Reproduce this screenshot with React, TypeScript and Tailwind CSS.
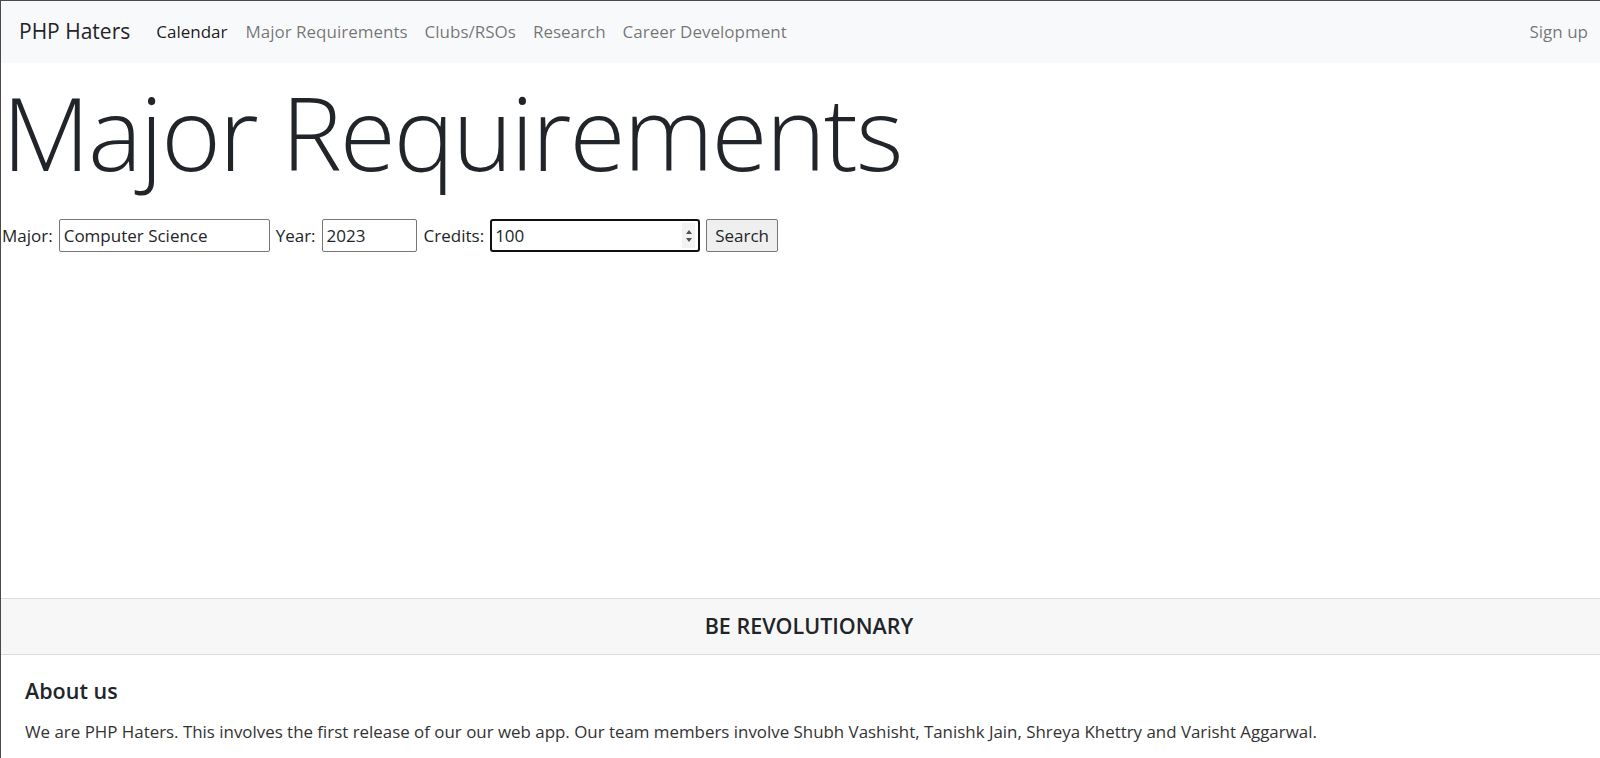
import { useState } from 'react';

const navLinks = ['Major Requirements', 'Clubs/RSOs', 'Research', 'Career Development'];

export default function App() {
  const [major, setMajor] = useState('Computer Science');
  const [year, setYear] = useState('2023');
  const [credits, setCredits] = useState('100');

  return (
    <div
      className="min-h-[758px] bg-white text-[#212529] border-l border-t border-[#4a4a4a] overflow-hidden"
      style={{ fontFamily: '"Open Sans", "Noto Sans", sans-serif' }}
    >
      <nav className="h-[62px] bg-[#f8f9fa] flex items-center pl-[18px] pr-[12px]">
        <span className="text-[21px] mr-[26px]">PHP Haters</span>
        <a className="text-[17px] text-[rgba(0,0,0,0.9)] mr-[18px]">Calendar</a>
        {navLinks.map((l) => (
          <a key={l} className="text-[17px] text-[rgba(0,0,0,0.55)] mr-[17px]">
            {l}
          </a>
        ))}
        <a className="ml-auto text-[17px] text-[rgba(0,0,0,0.55)]">Sign up</a>
      </nav>

      <main className="h-[535px]">
        <h1 className="text-[102px] font-light leading-[1.2] pl-[1px] pt-[8px] tracking-[-2px]">
          Major Requirements
        </h1>
        <form
          className="flex items-center gap-[6px] text-[17px] mt-[26px]"
          onSubmit={(e) => e.preventDefault()}
        >
          <label htmlFor="major" className="pl-[1px]">Major:</label>
          <input
            id="major"
            value={major}
            onChange={(e) => setMajor(e.target.value)}
            className="w-[211px] h-[33px] border border-[#767676] rounded-[2px] px-[4px] outline-none"
          />
          <label htmlFor="year">Year:</label>
          <input
            id="year"
            value={year}
            onChange={(e) => setYear(e.target.value)}
            className="w-[95px] h-[33px] border border-[#767676] rounded-[2px] px-[4px] outline-none"
          />
          <label htmlFor="credits" className="ml-[1px]">Credits:</label>
          <div className="relative">
            <input
              id="credits"
              value={credits}
              onChange={(e) => setCredits(e.target.value)}
              className="w-[210px] h-[33px] border-2 border-[#101010] rounded-[3px] px-[3px] outline-none"
            />
            <div className="absolute right-[5px] top-[4px] bottom-[4px] w-[13px] bg-[#f3f3f3] flex flex-col items-center justify-center gap-[4px]">
              <span className="block w-0 h-0 border-l-[3px] border-r-[3px] border-b-[4px] border-l-transparent border-r-transparent border-b-[#505050]" />
              <span className="block w-0 h-0 border-l-[3px] border-r-[3px] border-t-[4px] border-l-transparent border-r-transparent border-t-[#505050]" />
            </div>
          </div>
          <button
            type="submit"
            className="h-[33px] px-[8px] bg-[#efefef] border border-[#767676] rounded-[2px]"
          >
            Search
          </button>
        </form>
      </main>

      <footer>
        <div className="h-[57px] bg-[#f7f7f7] border-t border-b border-[#dcdcdc] flex items-center justify-center pl-[17px]">
          <h5 className="text-[21.5px] font-semibold">BE REVOLUTIONARY</h5>
        </div>
        <div className="px-[24px] pt-[20px]">
          <h5 className="text-[21.5px] font-semibold mb-[12px]">About us</h5>
          <p className="text-[16.9px] text-[#333]">
            We are PHP Haters. This involves the first release of our our web app. Our team members involve Shubh Vashisht, Tanishk Jain, Shreya Khettry and Varisht Aggarwal.
          </p>
        </div>
      </footer>
    </div>
  );
}
